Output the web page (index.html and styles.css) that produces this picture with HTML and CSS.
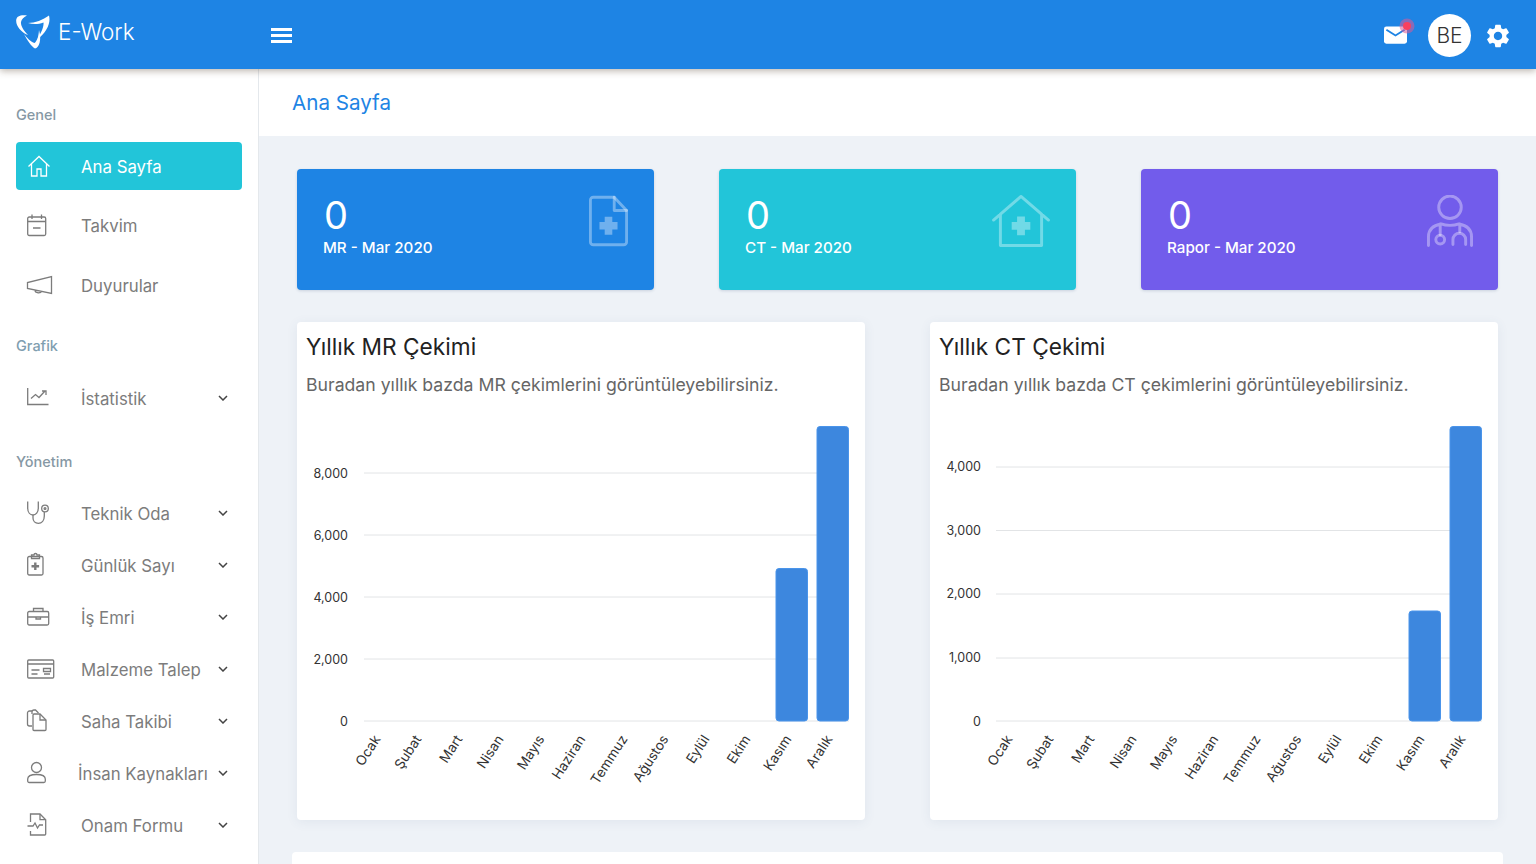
FILE: index.html
```html
<!DOCTYPE html>
<html lang="tr">
<head>
  <meta charset="UTF-8" />
  <title>E-Work</title>
  <link rel="stylesheet" href="styles.css">
</head>
<body>

  <header class="topbar">
    <div class="brand">
      <svg class="brand-mark" viewBox="0 0 34 34" fill="#fff">
        <path d="M11 .5C5-.5 .5 1 .2 5C-.2 11 5 17 12 20C8 16 4.500 11 5 7C5.500 4 8 2 11 .5Z"/>
        <path d="M12 8C19 8 27 5 33 .5C35 8 31 17 21 25C25 18 28 12 27.500 7.500C22 9.500 17 9.500 12 8Z"/>
        <path d="M8 19C11 25 15 31 19 33.500C23 33 26 25 23 15C22.500 22 21 26 18.500 28C15 27 11 23 8 19Z"/>
      </svg>
      <span class="brand-name">E-Work</span>
    </div>
    <div class="hamburger"><span></span><span></span><span></span></div>
    <div class="top-actions">
      <div class="mail">
        <svg viewBox="0 0 24 18" width="23" height="18">
          <rect width="24" height="18" rx="2.500" fill="#fff"/>
          <path d="M2.500 3.500L12 9.500l9.500-6" fill="none" stroke="#1e84e4" stroke-width="2"/>
        </svg>
        <span class="mail-dot"></span>
      </div>
      <div class="avatar">BE</div>
      <svg class="gear" viewBox="0 0 24 24" width="28" height="28" fill="#fff">
        <path d="M19.14 12.94c.04-.3.06-.61.06-.94 0-.32-.02-.64-.07-.94l2.03-1.58a.49.49 0 0 0 .12-.61l-1.92-3.32a.488.488 0 0 0-.59-.22l-2.39.96c-.5-.38-1.03-.7-1.62-.94l-.36-2.54a.484.484 0 0 0-.48-.41h-3.84c-.24 0-.43.17-.47.41l-.36 2.54c-.59.24-1.13.57-1.62.94l-2.39-.96c-.22-.08-.47 0-.59.22L2.74 8.87c-.12.21-.08.47.12.61l2.03 1.58c-.05.3-.09.63-.09.94s.02.64.07.94l-2.03 1.58a.49.49 0 0 0-.12.61l1.92 3.32c.12.22.37.29.59.22l2.39-.96c.5.38 1.03.7 1.62.94l.36 2.54c.05.24.24.41.48.41h3.84c.24 0 .44-.17.47-.41l.36-2.54c.59-.24 1.13-.56 1.62-.94l2.39.96c.22.08.47 0 .59-.22l1.92-3.32c.12-.22.07-.47-.12-.61l-2.01-1.58zM12 15.6c-1.98 0-3.6-1.62-3.6-3.6s1.62-3.6 3.6-3.6 3.6 1.62 3.6 3.6-1.62 3.6-3.6 3.6z"/>
      </svg>
    </div>
  </header>

  <div class="layout">
    <aside class="sidebar">
      <div class="nav-title">Genel</div>
      <a class="nav-item big active">
        <svg class="nav-icon" viewBox="0 0 24 24"><path d="M1.500 12.500L12 2.500l10.500 10M4.500 9.500V22h5.500V15h4v7h5.500V9.500"/></svg>
        <span>Ana Sayfa</span>
      </a>
      <a class="nav-item big">
        <svg class="nav-icon" viewBox="0 0 24 24"><rect x=".700" y="3" width="18" height="18.500" rx="1.500"/><path d="M.700 7.500h18M5 .500v4.500M14.500 .500v4.500M6 14h7.500"/></svg>
        <span>Takvim</span>
      </a>
      <a class="nav-item big">
        <svg class="nav-icon" viewBox="0 0 24 24"><path d="M.500 9.500v6L24.500 20.500V3.500L.500 9.500zM8 17c0 3.500 6 3.500 6.500 1"/></svg>
        <span>Duyurular</span>
      </a>

      <div class="nav-title second">Grafik</div>
      <a class="nav-item">
        <svg class="nav-icon" viewBox="0 0 24 24"><path d="M.700 2v16.500H21.500M4 12.500l4.500-4 3.500 3 6-6.500M15 5h4v4"/></svg>
        <span>İstatistik</span>
        <svg class="chevron" viewBox="0 0 10 6"><path d="M1 1l4 4 4-4"/></svg>
      </a>

      <div class="nav-title third">Yönetim</div>
      <a class="nav-item">
        <svg class="nav-icon" viewBox="0 0 24 24"><path d="M.700 .500v6.500c0 4.500 2.500 7 5.300 7s5.300-2.500 5.300-7V.500"/><path d="M6 14v3c0 3 2.200 5.300 5.300 5.300 3.500 0 6-2.800 6-7.300v-4"/><circle cx="18" cy="7.500" r="3.300"/><circle cx="18" cy="7.500" r=".900"/></svg>
        <span>Teknik Oda</span>
        <svg class="chevron" viewBox="0 0 10 6"><path d="M1 1l4 4 4-4"/></svg>
      </a>
      <a class="nav-item">
        <svg class="nav-icon" viewBox="0 0 24 24"><rect x=".700" y="3.500" width="15.300" height="18.500" rx="1.500"/><path d="M4.500 3.500V2h2.500a1.500 1.500 0 0 1 3 0h2.500V5.500h-8z"/><path d="M8.300 9.500v7.500M4.500 13.200h7.600" stroke-width="2.400"/></svg>
        <span>Günlük Sayı</span>
        <svg class="chevron" viewBox="0 0 10 6"><path d="M1 1l4 4 4-4"/></svg>
      </a>
      <a class="nav-item">
        <svg class="nav-icon" viewBox="0 0 24 24"><rect x=".700" y="6.500" width="21" height="13.500" rx="1.500"/><path d="M6.500 6.500V3.500h9.500v3M.700 12h21M9 12v2h4.500v-2"/></svg>
        <span>İş Emri</span>
        <svg class="chevron" viewBox="0 0 10 6"><path d="M1 1l4 4 4-4"/></svg>
      </a>
      <a class="nav-item">
        <svg class="nav-icon wide" viewBox="0 0 28 20"><rect x=".700" y="1" width="26" height="18" rx="1"/><path d="M.700 5h26M4.500 11h8M4.500 15h6M16.500 9.500h7v3h-7zM17 15h6"/></svg>
        <span>Malzeme Talep</span>
        <svg class="chevron" viewBox="0 0 10 6"><path d="M1 1l4 4 4-4"/></svg>
      </a>
      <a class="nav-item">
        <svg class="nav-icon" viewBox="0 0 24 24"><path d="M5 17H2.500a2 2 0 0 1-2-2V4a2 2 0 0 1 2-2H5"/><path d="M5 5V3a2 2 0 0 1 2-2h1.500l3 3"/><path d="M7 5h6l6 6v9.500a1 1 0 0 1-1 1H7a1 1 0 0 1-1-1V6a1 1 0 0 1 1-1z"/><path d="M13 5v6h6"/></svg>
        <span>Saha Takibi</span>
        <svg class="chevron" viewBox="0 0 10 6"><path d="M1 1l4 4 4-4"/></svg>
      </a>
      <a class="nav-item tight">
        <svg class="nav-icon" viewBox="0 0 24 24"><circle cx="9.500" cy="6.500" r="5"/><path d="M.700 18c0-3 2.500-4.500 8.800-4.500s8.800 1.500 8.800 4.500v2a1.500 1.500 0 0 1-1.500 1.500H2.200A1.500 1.500 0 0 1 .700 20z"/></svg>
        <span>İnsan Kaynakları</span>
        <svg class="chevron" viewBox="0 0 10 6"><path d="M1 1l4 4 4-4"/></svg>
      </a>
      <a class="nav-item">
        <svg class="nav-icon" viewBox="0 0 24 24"><path d="M3.500 9V1h9.500l5.700 5.700V21a1 1 0 0 1-1 1H3.500v-4"/><path d="M13 1v5.700h5.700M.500 13h5.500l2-3 2.500 5 2-3h3.500"/></svg>
        <span>Onam Formu</span>
        <svg class="chevron" viewBox="0 0 10 6"><path d="M1 1l4 4 4-4"/></svg>
      </a>
    </aside>

    <main class="main">
      <div class="page-title">Ana Sayfa</div>

      <div class="content">
        <div class="stats">
          <div class="stat blue">
            <div>
              <div class="stat-value">0</div>
              <div class="stat-label">MR - Mar 2020</div>
            </div>
            <svg class="stat-icon doc" viewBox="4.500 1.500 41 53">
              <path d="M9 3h22l13 14v33a3 3 0 0 1-3 3H9a3 3 0 0 1-3-3V6a3 3 0 0 1 3-3z"/>
              <path d="M31 3v14h13"/>
              <path class="plus" d="M21 23.500h8V29h5.500v8H29v5.500h-8V37h-5.500v-8H21z"/>
            </svg>
          </div>
          <div class="stat teal">
            <div>
              <div class="stat-value">0</div>
              <div class="stat-label">CT - Mar 2020</div>
            </div>
            <svg class="stat-icon house" viewBox=".500 1.500 59 53">
              <path d="M2 27L30 3l28 24M9 21v32h42V21"/>
              <path class="plus" d="M26 23.500h8V29h5.500v8H34v5.500h-8V37h-5.500v-8H26z"/>
            </svg>
          </div>
          <div class="stat purple">
            <div>
              <div class="stat-value">0</div>
              <div class="stat-label">Rapor - Mar 2020</div>
            </div>
            <svg class="stat-icon doctor" viewBox="1.500 1.500 47 53">
              <circle cx="25" cy="14" r="11.500"/>
              <path d="M3 53V44c0-9 7-12 13-13 5 2 13 2 18 0 6 1 13 4 13 13v9M15 31v11M35 31v8"/>
              <circle cx="15" cy="47" r="4.500"/>
              <path d="M28 52v-5a6.500 6.500 0 0 1 13 0v5"/>
            </svg>
          </div>
        </div>

        <div class="charts">
          <section class="panel">
            <h2>Yıllık MR Çekimi</h2>
            <p>Buradan yıllık bazda MR çekimlerini görüntüleyebilirsiniz.</p>
            <svg class="chart" viewBox="297 410 568 398">
              <g class="grid">
                <path d="M364 473H849M364 535H849M364 597H849M364 659H849M364 721H849"/>
              </g>
              <g class="y-labels">
                <text x="348" y="477.500">8,000</text>
                <text x="348" y="539.500">6,000</text>
                <text x="348" y="601.500">4,000</text>
                <text x="348" y="663.500">2,000</text>
                <text x="348" y="725.500">0</text>
              </g>
              <rect class="bar" x="776" y="568.500" width="31.500" height="152.500" rx="3"/>
              <rect class="bar" x="817" y="426.500" width="31.500" height="294.500" rx="3"/>
              <g class="x-labels">
                <text transform="translate(381 739) rotate(-57)">Ocak</text>
                <text transform="translate(422 739) rotate(-57)">Şubat</text>
                <text transform="translate(463 739) rotate(-57)">Mart</text>
                <text transform="translate(504 739) rotate(-57)">Nisan</text>
                <text transform="translate(545 739) rotate(-57)">Mayıs</text>
                <text transform="translate(586 739) rotate(-57)">Haziran</text>
                <text transform="translate(628 739) rotate(-57)">Temmuz</text>
                <text transform="translate(669 739) rotate(-57)">Ağustos</text>
                <text transform="translate(710 739) rotate(-57)">Eylül</text>
                <text transform="translate(751 739) rotate(-57)">Ekim</text>
                <text transform="translate(792 739) rotate(-57)">Kasım</text>
                <text transform="translate(833 739) rotate(-57)">Aralık</text>
              </g>
            </svg>
          </section>

          <section class="panel">
            <h2>Yıllık CT Çekimi</h2>
            <p>Buradan yıllık bazda CT çekimlerini görüntüleyebilirsiniz.</p>
            <svg class="chart" viewBox="930 410 568 398">
              <g class="grid">
                <path d="M996 467H1482M996 530.500H1482M996 594H1482M996 658H1482M996 721H1482"/>
              </g>
              <g class="y-labels">
                <text x="981" y="471">4,000</text>
                <text x="981" y="534.500">3,000</text>
                <text x="981" y="598">2,000</text>
                <text x="981" y="662">1,000</text>
                <text x="981" y="725.500">0</text>
              </g>
              <rect class="bar" x="1409" y="611" width="31.500" height="110" rx="3"/>
              <rect class="bar" x="1450" y="426.500" width="31.500" height="294.500" rx="3"/>
              <g class="x-labels">
                <text transform="translate(1013 739) rotate(-57)">Ocak</text>
                <text transform="translate(1054 739) rotate(-57)">Şubat</text>
                <text transform="translate(1095 739) rotate(-57)">Mart</text>
                <text transform="translate(1137 739) rotate(-57)">Nisan</text>
                <text transform="translate(1178 739) rotate(-57)">Mayıs</text>
                <text transform="translate(1219 739) rotate(-57)">Haziran</text>
                <text transform="translate(1261 739) rotate(-57)">Temmuz</text>
                <text transform="translate(1302 739) rotate(-57)">Ağustos</text>
                <text transform="translate(1342 739) rotate(-57)">Eylül</text>
                <text transform="translate(1383 739) rotate(-57)">Ekim</text>
                <text transform="translate(1425 739) rotate(-57)">Kasım</text>
                <text transform="translate(1466 739) rotate(-57)">Aralık</text>
              </g>
            </svg>
          </section>
        </div>

        <div class="next-panel"></div>
      </div>
    </main>
  </div>

</body>
</html>
```

FILE: styles.css
```css
* {
  box-sizing: border-box;
}

html,
body {
  margin: 0;
  padding: 0;
  height: 100%;
  overflow: hidden;
}

body {
  font-family: Inter, "Noto Sans", sans-serif;
  background-color: #eef2f7;
  display: flex;
  flex-direction: column;
}

/* top bar */
.topbar {
  height: 69px;
  flex-shrink: 0;
  display: flex;
  align-items: center;
  background-color: #1e84e4;
  box-shadow: 0 2px 7px rgba(60, 40, 20, 0.35);
  position: relative;
  z-index: 2;
}

.brand {
  display: flex;
  align-items: center;
  width: 271px;
  padding-left: 16px;
  margin-top: -5px;
}

.brand-mark {
  width: 34px;
  height: 34px;
}

.brand-name {
  margin-left: 8px;
  margin-top: -2px;
  color: #fff;
  font-size: 22.500px;
  font-weight: 300;
}

.hamburger {
  width: 21px;
  display: flex;
  flex-direction: column;
  gap: 3.500px;
  margin-top: 2px;
}

.hamburger span {
  display: block;
  height: 2.500px;
  background-color: #fff;
}

.top-actions {
  margin-left: auto;
  display: flex;
  align-items: center;
  padding-right: 24px;
  margin-top: 2px;
}

.mail {
  position: relative;
  width: 23px;
  height: 18px;
  margin-right: 21px;
  margin-top: -1px;
}

.mail svg {
  display: block;
}

.mail-dot {
  position: absolute;
  top: -4px;
  right: -4px;
  width: 8px;
  height: 8px;
  border-radius: 50%;
  background-color: #f8405f;
  box-shadow: 0 0 0 3.500px rgba(220, 90, 150, 0.55);
}

.avatar {
  width: 43px;
  height: 43px;
  border-radius: 50%;
  background-color: #fff;
  color: #333;
  font-size: 21px;
  font-weight: 300;
  display: flex;
  align-items: center;
  justify-content: center;
}

.gear {
  margin-left: 13px;
}

/* sidebar */
.layout {
  flex: 1;
  display: flex;
  min-height: 0;
}

.sidebar {
  width: 259px;
  flex-shrink: 0;
  background-color: #fff;
  border-right: 1px solid #e4e8ec;
  padding: 36px 16px 0;
  overflow: hidden;
}

.nav-title {
  height: 20px;
  line-height: 20px;
  font-size: 14.500px;
  font-weight: 500;
  color: #8698a4;
  margin-bottom: 17px;
}

.nav-title.second {
  margin-top: 27px;
  margin-bottom: 16px;
  color: #7f9eb0;
}

.nav-title.third {
  margin-top: 28px;
  margin-bottom: 15px;
}

.nav-item {
  display: flex;
  align-items: center;
  height: 52px;
  padding-left: 11px;
  padding-right: 14px;
  color: #7c7c7c;
  font-size: 16.800px;
}

.nav-item span {
  margin-top: 1px;
}

.nav-item.big {
  height: 48px;
  margin-bottom: 11.500px;
  border-radius: 4px;
}

.nav-item.active {
  background-color: #22c5d9;
  color: #fff;
}

.nav-icon {
  width: 24px;
  height: 24px;
  margin-right: 30px;
  flex-shrink: 0;
  fill: none;
  stroke: #7c7c7c;
  stroke-width: 1.300;
  overflow: visible;
}

.nav-icon.wide {
  width: 28px;
  height: 20px;
  margin-right: 26px;
}

.active .nav-icon {
  stroke: #fff;
}

.nav-item.tight span {
  margin-left: -3px;
  white-space: nowrap;
}

.chevron {
  width: 10px;
  height: 6px;
  margin-left: auto;
  flex-shrink: 0;
  fill: none;
  stroke: #444;
  stroke-width: 1.500;
}

/* main */
.main {
  flex: 1;
  min-width: 0;
  overflow: hidden;
}

.page-title {
  height: 67px;
  padding-left: 33px;
  line-height: 67px;
  background-color: #fff;
  color: #1e84e4;
  font-size: 20.600px;
}

.content {
  padding: 33px 33px 0;
}

.stats {
  display: grid;
  grid-template-columns: repeat(3, 357px);
  justify-content: space-between;
  margin: 0 5px;
}

.stat {
  height: 121px;
  border-radius: 4px;
  display: flex;
  justify-content: space-between;
  padding: 26px 26px 0;
  color: #fff;
  box-shadow: 0 1px 3px rgba(60, 90, 130, 0.2);
}

.stat.blue {
  background-color: #1e84e4;
}

.stat.teal {
  background-color: #22c5d9;
}

.stat.purple {
  background-color: #725ceb;
}

.stat-value {
  font-size: 38px;
  line-height: 40px;
  margin-left: 1px;
}

.stat-label {
  margin-top: 1.500px;
  font-size: 15.200px;
  line-height: 22px;
  font-weight: 500;
}

.stat-icon {
  height: 52px;
  flex-shrink: 0;
  fill: none;
  stroke: rgba(255, 255, 255, 0.36);
  stroke-width: 3;
  stroke-linecap: round;
  stroke-linejoin: round;
}

.stat-icon.doc {
  width: 39px;
}

.stat-icon.house {
  width: 58px;
}

.stat-icon.doctor {
  width: 46px;
  margin-right: -1px;
}

.stat-icon .plus {
  fill: rgba(255, 255, 255, 0.36);
  stroke: none;
}

.charts {
  display: grid;
  grid-template-columns: repeat(2, 568px);
  justify-content: space-between;
  margin: 32px 5px 0;
}

.panel {
  height: 498px;
  padding: 9px 9px 0;
  background-color: #fff;
  border-radius: 4px;
  box-shadow: 0 2px 12px rgba(60, 90, 130, 0.08);
}

.panel h2 {
  margin: 0;
  font-size: 22.700px;
  line-height: 32px;
  font-weight: 400;
  color: #222;
}

.panel p {
  margin: 8px 0 0;
  font-size: 17.670px;
  line-height: 28px;
  color: #666;
}

.chart {
  display: block;
  width: 568px;
  height: 398px;
  margin: 11px 0 0 -9px;
}

.grid path {
  fill: none;
  stroke: #e2e4e6;
  stroke-width: 1;
}

.y-labels text {
  font-size: 12.500px;
  fill: #333;
  text-anchor: end;
}

.x-labels text {
  font-size: 13.600px;
  fill: #333;
  text-anchor: end;
}

.bar {
  fill: #3d87de;
  stroke: #4a94ea;
  stroke-width: 1;
}

.next-panel {
  height: 120px;
  margin-top: 32px;
  background-color: #fff;
  border-radius: 4px;
}
```
